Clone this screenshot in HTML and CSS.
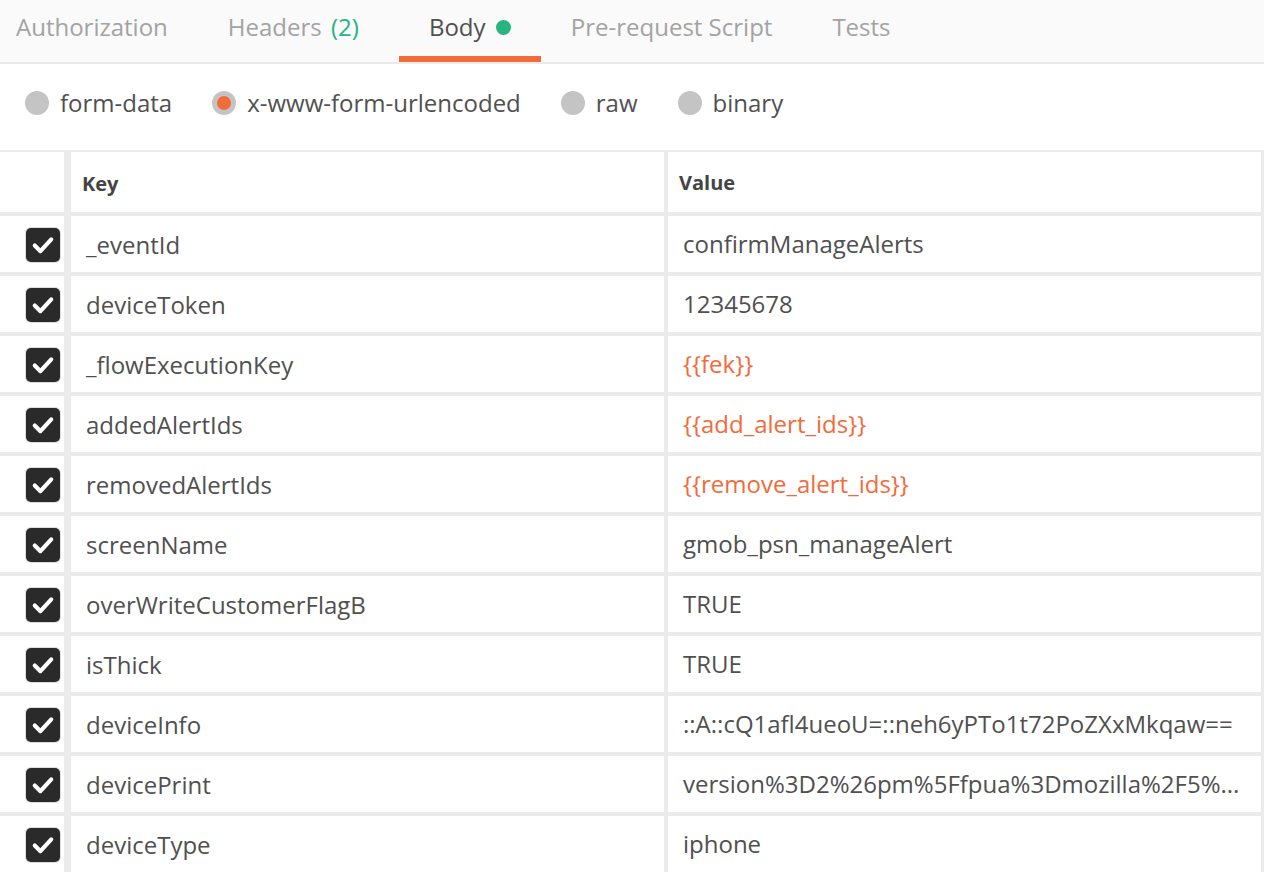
FILE: index.html
```html
<!DOCTYPE html>
<html>
<head>
<meta charset="utf-8">
<link rel="stylesheet" href="styles.css">
</head>
<body>
<div class="tabs">
  <div class="tab first">Authorization</div>
  <div class="tab headers">Headers <span class="count">(2)</span></div>
  <div class="tab active">Body <span class="dot"></span></div>
  <div class="tab">Pre-request Script</div>
  <div class="tab">Tests</div>
</div>
<div class="modes">
  <label class="mode"><span class="radio"></span>form-data</label>
  <label class="mode"><span class="radio on"></span>x-www-form-urlencoded</label>
  <label class="mode"><span class="radio"></span>raw</label>
  <label class="mode"><span class="radio"></span>binary</label>
</div>
<div class="grid">
  <div class="cell head chk"></div>
  <div class="cell head key">Key</div>
  <div class="cell head val">Value</div>

  <div class="cell chk"><span class="box"><svg viewBox="0 0 33 33"><polyline points="8.5,17 14,22.5 24.5,11" /></svg></span></div>
  <div class="cell key">_eventId</div>
  <div class="cell val">confirmManageAlerts</div>

  <div class="cell chk"><span class="box"><svg viewBox="0 0 33 33"><polyline points="8.5,17 14,22.5 24.5,11" /></svg></span></div>
  <div class="cell key">deviceToken</div>
  <div class="cell val">12345678</div>

  <div class="cell chk"><span class="box"><svg viewBox="0 0 33 33"><polyline points="8.5,17 14,22.5 24.5,11" /></svg></span></div>
  <div class="cell key">_flowExecutionKey</div>
  <div class="cell val var">{{fek}}</div>

  <div class="cell chk"><span class="box"><svg viewBox="0 0 33 33"><polyline points="8.5,17 14,22.5 24.5,11" /></svg></span></div>
  <div class="cell key">addedAlertIds</div>
  <div class="cell val var">{{add_alert_ids}}</div>

  <div class="cell chk"><span class="box"><svg viewBox="0 0 33 33"><polyline points="8.5,17 14,22.5 24.5,11" /></svg></span></div>
  <div class="cell key">removedAlertIds</div>
  <div class="cell val var">{{remove_alert_ids}}</div>

  <div class="cell chk"><span class="box"><svg viewBox="0 0 33 33"><polyline points="8.5,17 14,22.5 24.5,11" /></svg></span></div>
  <div class="cell key">screenName</div>
  <div class="cell val">gmob_psn_manageAlert</div>

  <div class="cell chk"><span class="box"><svg viewBox="0 0 33 33"><polyline points="8.5,17 14,22.5 24.5,11" /></svg></span></div>
  <div class="cell key">overWriteCustomerFlagB</div>
  <div class="cell val">TRUE</div>

  <div class="cell chk"><span class="box"><svg viewBox="0 0 33 33"><polyline points="8.5,17 14,22.5 24.5,11" /></svg></span></div>
  <div class="cell key">isThick</div>
  <div class="cell val">TRUE</div>

  <div class="cell chk"><span class="box"><svg viewBox="0 0 33 33"><polyline points="8.5,17 14,22.5 24.5,11" /></svg></span></div>
  <div class="cell key">deviceInfo</div>
  <div class="cell val">::A::cQ1afl4ueoU=::neh6yPTo1t72PoZXxMkqaw==</div>

  <div class="cell chk"><span class="box"><svg viewBox="0 0 33 33"><polyline points="8.5,17 14,22.5 24.5,11" /></svg></span></div>
  <div class="cell key">devicePrint</div>
  <div class="cell val">version%3D2%26pm%5Ffpua%3Dmozilla%2F5%...</div>

  <div class="cell chk"><span class="box"><svg viewBox="0 0 33 33"><polyline points="8.5,17 14,22.5 24.5,11" /></svg></span></div>
  <div class="cell key">deviceType</div>
  <div class="cell val">iphone</div>
</div>
</body>
</html>
```

FILE: styles.css
```css
* { box-sizing: border-box; }
html, body {
  margin: 0;
  padding: 0;
  background: #ffffff;
  overflow: hidden;
}
body {
  width: 1264px;
  height: 872px;
  font-family: "Open Sans", "Noto Sans", sans-serif;
  color: #505050;
}
.tabs {
  display: flex;
  height: 64px;
  background: #fafafa;
  border-bottom: 2px solid #ebebeb;
}
.tab {
  height: 62px;
  padding: 10px 30px 0;
  font-size: 24px;
  line-height: 33px;
  color: #a3a3a3;
  white-space: nowrap;
}
.tab.first { padding-left: 16px; }
.tab.headers { padding-right: 40px; }
.count { color: #26b47f; margin-left: 3px; }
.tab.active {
  color: #505050;
  border-bottom: 6px solid #f26b3a;
}
.dot {
  display: inline-block;
  width: 15px;
  height: 15px;
  border-radius: 50%;
  background: #26b47f;
  margin-left: 4px;
  vertical-align: 1px;
}
.modes {
  display: flex;
  align-items: center;
  height: 77px;
  margin-bottom: 9px;
  padding-left: 25px;
  gap: 40px;
}
.mode {
  display: flex;
  align-items: center;
  gap: 11px;
  font-size: 24px;
  line-height: 33px;
  color: #505050;
}
.radio {
  width: 24px;
  height: 24px;
  border-radius: 50%;
  background: #c4c4c4;
  display: flex;
  align-items: center;
  justify-content: center;
}
.radio.on::after {
  content: "";
  width: 14px;
  height: 14px;
  border-radius: 50%;
  background: #f26b3a;
}
.grid {
  background: #ebebeb;
  padding: 2px 3px 0 0;
  display: grid;
  grid-template-columns: 64px 596px 1fr;
  grid-auto-rows: 56px;
  grid-template-rows: 60px;
  column-gap: 4px;
  row-gap: 4px;
}
.cell {
  background: #ffffff;
  display: flex;
  align-items: center;
  font-size: 24px;
  white-space: nowrap;
  overflow: hidden;
  min-width: 0;
}
.cell.key {
  border-left: 3px solid #ebebeb;
  padding-left: 15px;
}
.cell.val {
  padding-left: 15px;
  padding-right: 14px;
  display: block;
  line-height: 56px;
  text-overflow: ellipsis;
}
.cell.head {
  font-size: 20px;
  font-weight: 700;
  color: #444444;
  padding-top: 2px;
}
.cell.head.key { padding-left: 11px; }
.cell.head.val { line-height: 58px; padding-left: 11px; }
.cell.var { color: #f26b3a; }
.cell.chk {
  justify-content: flex-end;
  padding-right: 4px;
}
.box {
  width: 34px;
  height: 34px;
  border-radius: 5px;
  background: #2a2a2a;
  box-shadow: 0 0 0 1px #dcdcdc;
  display: flex;
  margin-top: 2px;
}
.box svg {
  width: 34px;
  height: 34px;
}
.box polyline {
  fill: none;
  stroke: #ffffff;
  stroke-width: 4;
  stroke-linecap: round;
  stroke-linejoin: round;
}
```
